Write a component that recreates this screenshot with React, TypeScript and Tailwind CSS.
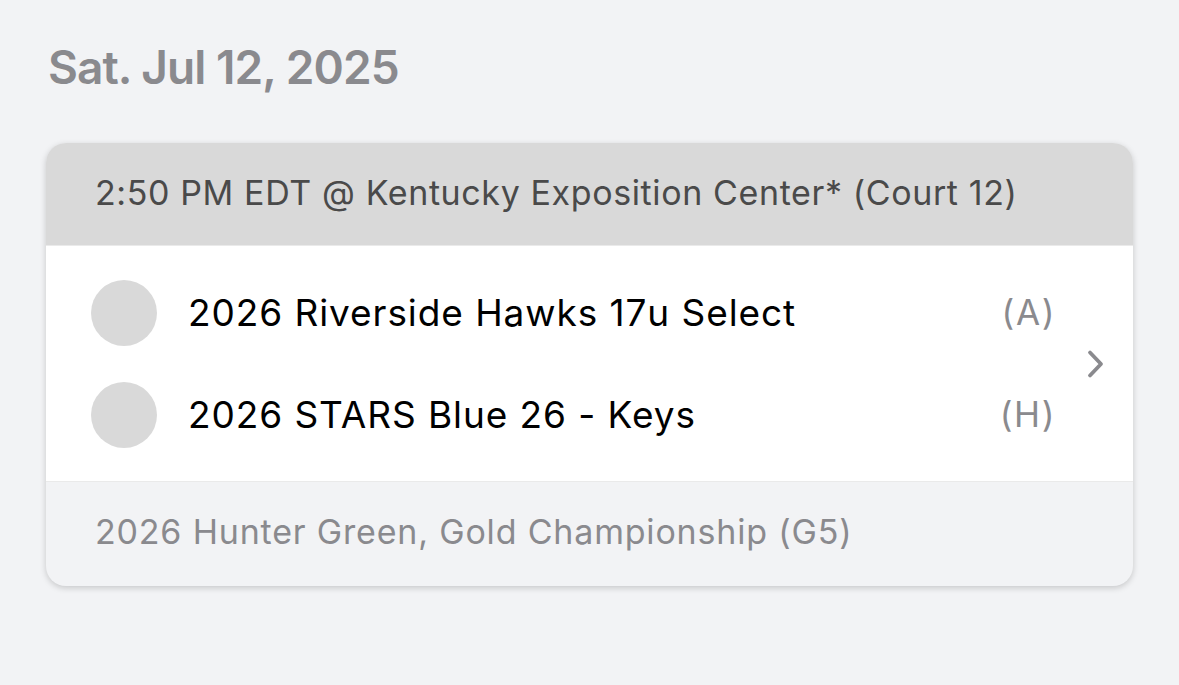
import React from "react";

const font = { fontFamily: "Inter, 'Noto Sans', sans-serif" };

function Row({ name, tag }: { name: string; tag: string }) {
  return (
    <div className="flex items-center h-[102px]">
      <div className="w-[66px] h-[66px] rounded-full bg-[#d9d9d9] shrink-0" />
      <div className="ml-[31px] text-[37px] text-black flex-1 leading-none tracking-[0.025em]">{name}</div>
      <div className="text-[35px] text-[#8a8a8e] leading-none tracking-[0.045em]">{tag}</div>
    </div>
  );
}

export default function App() {
  return (
    <div className="w-[1179px] h-[685px] bg-[#f2f3f5] overflow-hidden" style={font}>
      <div className="pl-[48px] pt-[44px] h-[143px]">
        <div className="text-[46px] font-semibold text-[#8a8a8e] leading-none tracking-[-0.02em]">Sat. Jul 12, 2025</div>
      </div>
      <div className="ml-[46px] w-[1087px] rounded-[20px] overflow-hidden shadow-[0_2px_6px_rgba(0,0,0,0.18)] bg-[#f2f3f5]">
        <div className="h-[102px] bg-[#d9d9d9] flex items-center pl-[49px] pb-[3px] text-[34px] text-[#4a4a4a] tracking-[0.018em]">
          2:50 PM EDT @ Kentucky Exposition Center* (Court 12)
        </div>
        <div className="h-[1px] bg-[#eaeaea]" />
        <div className="bg-white flex items-center pl-[45px] pr-[27px] h-[235px]">
          <div className="flex-1 flex flex-col pr-[30px]">
            <Row name="2026 Riverside Hawks 17u Select" tag="(A)" />
            <Row name="2026 STARS Blue 26 - Keys" tag="(H)" />
          </div>
          <svg width="20" height="30" viewBox="0 0 20 30" fill="none">
            <path d="M4 3.5l11 11.5-11 11.5" stroke="#8a8a8e" strokeWidth="3.8" strokeLinecap="round" strokeLinejoin="round" />
          </svg>
        </div>
        <div className="h-[1px] bg-[#eaeaea]" />
        <div className="h-[104px] flex items-center pl-[49px] pb-[6px] text-[34px] text-[#8a8a8e] tracking-[0.024em]">
          2026 Hunter Green, Gold Championship (G5)
        </div>
      </div>
    </div>
  );
}
